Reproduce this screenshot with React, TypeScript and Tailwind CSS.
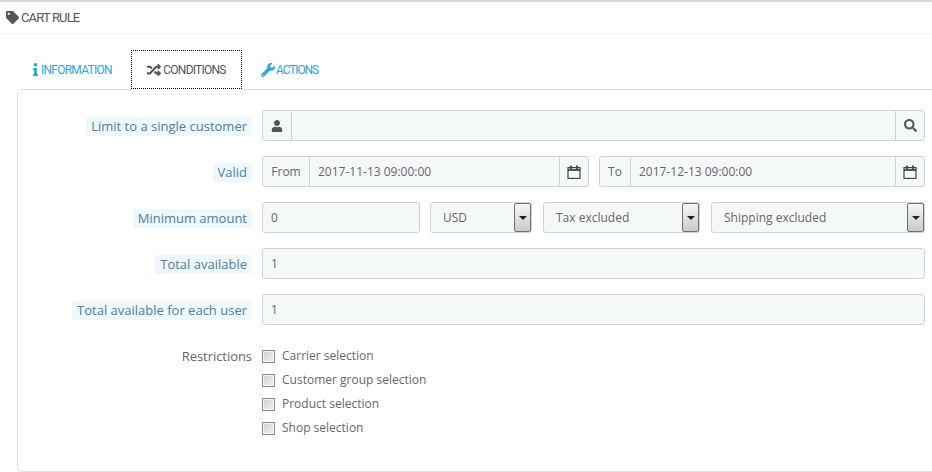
import { ReactNode } from 'react';
import { FaInfo, FaRandom, FaSearch, FaTag, FaUser, FaWrench } from 'react-icons/fa';

function CalendarIcon() {
  return (
    <svg width="14" height="14" viewBox="0 0 14 14" fill="none" stroke="#444" strokeWidth="1.2">
      <rect x="1" y="2.6" width="12" height="10.8" />
      <path d="M1 5h12" strokeWidth="1.8" />
      <path d="M4 0.6v3.4M10 0.6v3.4" strokeWidth="1.8" />
    </svg>
  );
}

function Label({ children }: { children: ReactNode }) {
  return (
    <div className="w-[234px] pt-[2px] flex justify-end items-center">
      <span className="bg-[#eef7fb] text-[#4d7f9e] text-[13px] leading-[19px] px-[5px] rounded-[2px]">{children}</span>
    </div>
  );
}

function Field({ children, className = '' }: { children?: ReactNode; className?: string }) {
  return (
    <div className={`h-[31px] flex items-center bg-[#f5f8f9] border border-[#c7d6db] rounded-[3px] text-[#666] text-[12px] ${className}`}>
      {children}
    </div>
  );
}

function Addon({ children, left = false }: { children: ReactNode; left?: boolean }) {
  return (
    <div className={`h-full w-[29px] shrink-0 flex items-center justify-center border-[#c7d6db] ${left ? 'border-r' : 'border-l'}`}>
      {children}
    </div>
  );
}

function DateField({ label, value, labelWidth, className }: { label: string; value: string; labelWidth: string; className: string }) {
  return (
    <Field className={className}>
      <div className={`h-full shrink-0 flex items-center justify-center border-r border-[#c7d6db] text-[#666] ${labelWidth}`}>{label}</div>
      <div className="flex-1 pl-[8px]">{value}</div>
      <Addon><CalendarIcon /></Addon>
    </Field>
  );
}

function SelectField({ value, className }: { value: string; className: string }) {
  return (
    <Field className={`relative pl-[12px] ${className}`}>
      <div>{value}</div>
      <div className="absolute right-0 top-0 bottom-0 w-[17px] flex items-center justify-center border border-[#6f6f6f] rounded-[2px] bg-gradient-to-b from-[#f8f8f8] to-[#c9c9c9]">
        <span className="w-0 h-0 border-x-[4px] border-x-transparent border-t-[4px] border-t-[#222]" />
      </div>
    </Field>
  );
}

function Row({ label, children }: { label: ReactNode; children: ReactNode }) {
  return (
    <div className="flex gap-[10px] h-[31px] mb-[15px]">
      {label}
      <div className="w-[663px] flex gap-[10px]">{children}</div>
    </div>
  );
}

function Check({ text }: { text: string }) {
  return (
    <div className="h-[24px] flex items-center gap-[7px] text-[#666] text-[12px]">
      <span className="w-[13px] h-[13px] border border-[#8a8a8a] bg-gradient-to-br from-[#d0d0d0] to-[#f4f4f4] shadow-[inset_0_0_0_1px_#f4f4f4]" />
      <span className="-mt-[1px]">{text}</span>
    </div>
  );
}

const tabText = "font-['Roboto',sans-serif] text-[12px] uppercase tracking-[-0.75px]";

export default function App() {
  return (
    <div className="w-[932px] h-[472px] overflow-hidden bg-white font-['Open_Sans',sans-serif]">
      <div className="h-[34px] border-t-2 border-b border-t-[#d9d9d9] border-b-[#eeeeee] pl-[6px] flex items-center gap-[2px] text-[#555]">
        <FaTag className="w-[13px] h-[13px]" />
        <span className="font-['Roboto',sans-serif] text-[13px] uppercase tracking-[-0.85px]">Cart Rule</span>
      </div>

      <div className="pl-[17px] pt-[16px]">
        <div className="flex h-[40px] pl-[14px] -mb-px relative">
          <div className={`w-[100px] h-[39px] flex items-center gap-[1px] text-[#2ea5dc] ${tabText}`}>
            <FaInfo className="w-[9px] h-[13px]" />
            <span>Information</span>
          </div>
          <div className="w-[111px] h-[40px] bg-white">
            <div className={`h-[39px] flex items-center justify-center gap-[1px] pr-[1px] border border-dotted border-black text-[#555] ${tabText}`}>
              <FaRandom className="w-[16px] h-[14px]" />
              <span>Conditions</span>
            </div>
          </div>
          <div className={`h-[39px] flex items-center gap-[1px] pl-[19px] text-[#2ea5dc] ${tabText} tracking-[-1.1px]`}>
            <FaWrench className="w-[14px] h-[14px]" />
            <span>Actions</span>
          </div>
        </div>

        <div className="w-[930px] h-[383px] border border-[#dddddd] rounded-[5px] pt-[20px]">
          <Row label={<Label>Limit to a single customer</Label>}>
            <Field className="w-full">
              <Addon left><FaUser className="w-[12px] h-[12px] text-[#555]" /></Addon>
              <div className="flex-1" />
              <Addon><FaSearch className="w-[13px] h-[13px] text-[#555]" /></Addon>
            </Field>
          </Row>
          <Row label={<Label>Valid</Label>}>
            <DateField className="w-[327px]" labelWidth="w-[47px]" label="From" value="2017-11-13 09:00:00" />
            <DateField className="w-[326px]" labelWidth="w-[31px]" label="To" value="2017-12-13 09:00:00" />
          </Row>
          <Row label={<Label>Minimum amount</Label>}>
            <Field className="w-[158px] pl-[8px]">0</Field>
            <SelectField className="w-[102px]" value="USD" />
            <SelectField className="w-[157px] ml-[1px]" value="Tax excluded" />
            <SelectField className="w-[214px] ml-[1px]" value="Shipping excluded" />
          </Row>
          <Row label={<Label>Total available</Label>}>
            <Field className="w-full pl-[8px]">1</Field>
          </Row>
          <Row label={<Label>Total available for each user</Label>}>
            <Field className="w-full pl-[8px]">1</Field>
          </Row>
          <div className="flex gap-[10px] pt-[4px]">
            <div className="w-[234px] h-[24px] pt-[2px] flex items-center justify-end text-[13px] tracking-[-0.05px] text-[#666]">Restrictions</div>
            <div className="flex flex-col">
              <Check text="Carrier selection" />
              <Check text="Customer group selection" />
              <Check text="Product selection" />
              <Check text="Shop selection" />
            </div>
          </div>
        </div>
      </div>
    </div>
  );
}
